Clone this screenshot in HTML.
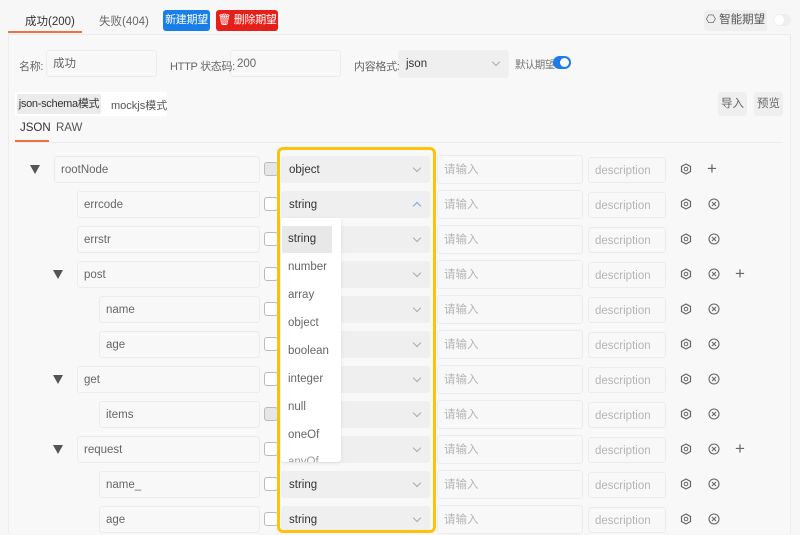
<!DOCTYPE html>
<html><head><meta charset="utf-8"><style>
*{box-sizing:border-box;margin:0;padding:0}
body{width:800px;height:533px;overflow:hidden;background:#f7f7f7;font-family:"Liberation Sans","Noto Sans CJK SC",sans-serif;font-size:11.5px;color:#333;position:relative}
.a,.inp,.sel,.btn{white-space:nowrap}
.a{position:absolute}
.lb{z-index:2;letter-spacing:-0.3px}
.inp{position:absolute;height:27px;border:1px solid #ececec;border-radius:3px;background:#f8f8f8;line-height:27px;padding-left:6px;color:#666}
.ph{color:#b5b5b5}
.sel{position:absolute;height:27px;background:#efefef;border-radius:3px;line-height:28px;padding-left:8px;color:#333}
.chev{position:absolute;right:10px;top:9px;width:6px;height:6px;border-right:1px solid #aaa;border-bottom:1px solid #aaa;transform:rotate(45deg)}
.cb{position:absolute;width:14px;height:14px;border:1px solid #bbb;border-radius:3px;background:#fff}
.tri{position:absolute;width:0;height:0;border-left:5px solid transparent;border-right:5px solid transparent;border-top:9px solid #555}
.btn{position:absolute;height:21px;border-radius:3px;color:#fff;font-size:11px;line-height:21px;text-align:center;letter-spacing:-0.3px}
</style></head><body>
<div class="a" style="left:25px;top:13px;color:#333">成功(200)</div>
<div class="a" style="left:8px;top:31px;width:74px;height:2px;background:#f07040"></div>
<div class="a" style="left:99px;top:13px;color:#666">失败(404)</div>
<div class="btn" style="left:163px;top:10px;width:47px;background:#1a7ee8">新建期望</div>
<div class="btn" style="left:216px;top:10px;width:62px;background:#e5201a">&#x1F5D1;&#xFE0E; 删除期望</div>
<div class="a" style="left:704px;top:10px;width:63px;height:21px;background:#efefef;border-radius:3px;line-height:21px;text-align:center;color:#555">⎔ 智能期望</div>
<div class="a" style="left:773px;top:14px;width:18px;height:12px;background:#eee;border-radius:6px"><div class="a" style="left:1px;top:1px;width:10px;height:10px;border-radius:5px;background:#fff"></div></div>
<div class="a" style="left:8px;top:34px;width:783px;height:499px;border:1px solid #ececec;border-bottom:none;background:#f8f8f8"></div>

<div class="a lb" style="left:19px;top:58px;color:#666;font-size:11px">名称:</div>
<div class="inp" style="left:46px;top:50px;width:111px">成功</div>
<div class="a lb" style="left:170px;top:58px;color:#666;font-size:11px">HTTP 状态码:</div>
<div class="inp" style="left:230px;top:50px;width:111px">200</div>
<div class="a lb" style="left:354px;top:58px;color:#666;font-size:11px">内容格式:</div>
<div class="sel" style="left:398px;top:50px;width:111px;height:28px;line-height:28px">json<div class="chev"></div></div>
<div class="a lb" style="left:515px;top:57px;color:#777;font-size:10.5px;letter-spacing:-0.6px">默认期望</div>
<div class="a" style="left:553px;top:56px;width:18px;height:13px;background:#1a7ee8;border-radius:7px;z-index:3"><div class="a" style="left:7px;top:2px;width:9px;height:9px;border-radius:5px;background:#fff"></div></div>

<div class="a" style="left:15px;top:92px;width:152px;height:24px;background:#fff;border-radius:3px"></div>
<div class="a" style="left:17px;top:94px;width:84px;height:20px;background:#ebebeb;border-radius:2px;line-height:20px;text-align:center;font-size:11px;letter-spacing:-0.3px">json-schema模式</div>
<div class="a" style="left:111px;top:97px;color:#555;font-size:11px">mockjs模式</div>
<div class="a" style="left:718px;top:92px;width:29px;height:24px;background:#efefef;border-radius:3px;line-height:24px;text-align:center;color:#666">导入</div>
<div class="a" style="left:754px;top:92px;width:29px;height:24px;background:#efefef;border-radius:3px;line-height:24px;text-align:center;color:#666">预览</div>
<div class="a" style="left:20px;top:122px;color:#333">JSON</div>
<div class="a" style="left:56px;top:122px;color:#555">RAW</div>
<div class="a" style="left:15px;top:142px;width:768px;height:1px;background:#ececec"></div>
<div class="a" style="left:15px;top:140px;width:34px;height:2px;background:#f07040"></div>

<div id="rows"></div>
<div class="a" style="left:277px;top:147px;width:159px;height:386px;border:3px solid #fcc20e;border-radius:6px"></div>
<div class="a" style="left:281px;top:218px;width:60px;height:244px;background:#fff;border-radius:3px;box-shadow:0 1px 4px rgba(0,0,0,.08);overflow:hidden">
<div class="a" style="left:1px;top:8px;width:50px;height:27px;background:#e8e8e8"></div>
<div class="a" style="left:7px;top:15px;color:#333">string</div>
<div class="a" style="left:7px;top:43px;color:#666">number</div>
<div class="a" style="left:7px;top:71px;color:#666">array</div>
<div class="a" style="left:7px;top:99px;color:#666">object</div>
<div class="a" style="left:7px;top:127px;color:#666">boolean</div>
<div class="a" style="left:7px;top:155px;color:#666">integer</div>
<div class="a" style="left:7px;top:183px;color:#666">null</div>
<div class="a" style="left:7px;top:211px;color:#666">oneOf</div>
<div class="a" style="left:7px;top:238px;color:#999;height:6px;overflow:hidden">anyOf</div>
</div>
<script>
var R=[["rootNode",0,1,"object","+",0],["errcode",1,0,"string","x",0],["errstr",1,0,"string","x",0],["post",1,1,"string","x+",0],["name",2,0,"string","x",0],["age",2,0,"string","x",0],["get",1,1,"string","x",0],["items",2,0,"string","x",1],["request",1,1,"string","x+",0],["name_",2,0,"string","x",0],["age",2,0,"string","x",0]];
var h="";
R.forEach(function(r,i){var c=169+35*i,t=c-13;var x=[54,77,99][r[1]];
if(r[2])h+='<div class="tri" style="left:'+(r[1]?53:30)+'px;top:'+(c-4)+'px"></div>';
h+='<div class="inp" style="left:'+x+'px;top:'+t+'px;width:'+(260-x)+'px">'+r[0]+'</div>';
h+='<div class="cb" style="left:264px;top:'+(c-7)+'px;'+(r[5]||i==0?'background:#e6e6e6':'')+'"></div>';
var up=i==1;
h+='<div class="sel" style="left:281px;top:'+t+'px;width:149px">'+r[3]+'<div class="chev" style="'+(up?'transform:rotate(225deg);top:12px;border-color:#6aa8f0':'')+'"></div></div>';
h+='<div class="inp ph" style="left:437px;top:'+(t-1)+'px;width:146px;height:29px;line-height:29px">请输入</div>';
h+='<div class="inp ph" style="left:588px;top:'+(t+1)+'px;width:78px;height:26px;line-height:26px">description</div>';
h+='<svg class="a" style="left:680px;top:'+(c-6)+'px" width="12" height="12" viewBox="0 0 12 12"><polygon points="6,1 10.5,3.5 10.5,8.5 6,11 1.5,8.5 1.5,3.5" fill="none" stroke="#666" stroke-width="1.2"/><circle cx="6" cy="6" r="1.8" fill="none" stroke="#666"/></svg>';
var k=r[4];
if(k=="+")h+='<div class="a" style="left:707px;top:'+(c-10)+'px;font-size:17px;color:#666">+</div>';
else{h+='<svg class="a" style="left:708px;top:'+(c-6)+'px" width="12" height="12" viewBox="0 0 12 12"><circle cx="6" cy="6" r="5" fill="none" stroke="#666" stroke-width="1.1"/><path d="M4 4L8 8M8 4L4 8" stroke="#666" stroke-width="1.1"/></svg>';
if(k=="x+")h+='<div class="a" style="left:735px;top:'+(c-10)+'px;font-size:17px;color:#666">+</div>';}
});
document.getElementById("rows").innerHTML=h;
</script>
</body></html>
